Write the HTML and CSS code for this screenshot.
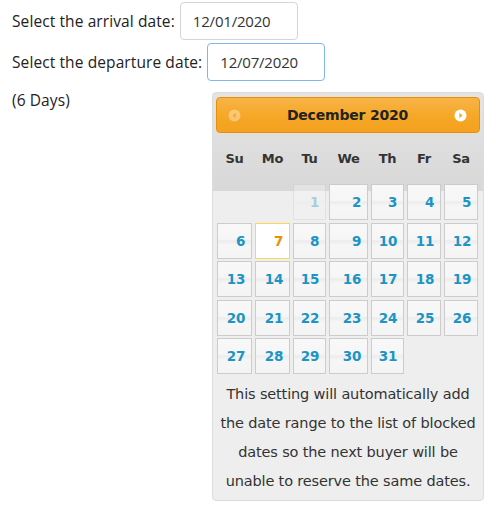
FILE: index.html
```html
<!DOCTYPE html>
<html>
<head>
<meta charset="utf-8">
<link rel="stylesheet" href="styles.css">
</head>
<body>
<div class="form">
  <div class="row">
    <span class="label">Select the arrival date:</span>
    <span class="input">12/01/2020</span>
  </div>
  <div class="row">
    <span class="label">Select the departure date:</span>
    <span class="input focus">12/07/2020</span>
  </div>
  <div class="days-row">
    <span class="days">(6 Days)</span>
    <div class="picker">
      <div class="picker-head">
        <span class="nav prev"><svg width="13" height="13" viewBox="0 0 13 13"><circle cx="6.5" cy="6.5" r="6" fill="#fff"/><path d="M7.6 3.8 L4.6 6.5 L7.6 9.2 Z" fill="#f6a828"/></svg></span>
        <span class="title">December 2020</span>
        <span class="nav next"><svg width="13" height="13" viewBox="0 0 13 13"><circle cx="6.5" cy="6.5" r="6" fill="#fff"/><path d="M5.4 3.8 L8.4 6.5 L5.4 9.2 Z" fill="#f6a828"/></svg></span>
      </div>
      <div class="dow">
        <span>Su</span><span>Mo</span><span>Tu</span><span>We</span><span>Th</span><span>Fr</span><span>Sa</span>
      </div>
      <div class="grid">
        <span class="empty"></span><span class="empty"></span>
        <span class="cell disabled">1</span><span class="cell">2</span><span class="cell">3</span><span class="cell">4</span><span class="cell">5</span>
        <span class="cell">6</span><span class="cell active">7</span><span class="cell">8</span><span class="cell">9</span><span class="cell">10</span><span class="cell">11</span><span class="cell">12</span>
        <span class="cell">13</span><span class="cell">14</span><span class="cell">15</span><span class="cell">16</span><span class="cell">17</span><span class="cell">18</span><span class="cell">19</span>
        <span class="cell">20</span><span class="cell">21</span><span class="cell">22</span><span class="cell">23</span><span class="cell">24</span><span class="cell">25</span><span class="cell">26</span>
        <span class="cell">27</span><span class="cell">28</span><span class="cell">29</span><span class="cell">30</span><span class="cell">31</span>
      </div>
      <p class="note">This setting will automatically add the date range to the list of blocked dates so the next buyer will be unable to reserve the same dates.</p>
    </div>
  </div>
</div>
</body>
</html>
```

FILE: styles.css
```css
* { box-sizing: border-box; }
html, body { margin: 0; padding: 0; background: #fff; }
body {
  font-family: "Open Sans", "Liberation Sans", sans-serif;
  font-size: 15.5px;
  letter-spacing: 0.1px;
  color: #222;
}
.form { padding: 2px 0 0 12px; }
.row {
  display: flex;
  align-items: center;
  gap: 5px;
  height: 38px;
  margin-bottom: 3px;
}
.label { white-space: nowrap; }
.input {
  display: flex;
  align-items: center;
  width: 118px;
  height: 38px;
  padding: 0 10px 0 12px;
  border: 1px solid #d5d5d5;
  border-radius: 4px;
  font-size: 15px;
  letter-spacing: -0.2px;
  color: #333;
}
.input.focus { border-color: #7fb6ee; }
.days-row {
  display: flex;
  align-items: flex-start;
  padding-top: 6px;
}
.days { width: 200px; line-height: 20px; }
.picker {
  margin-top: 2px;
  width: 272px;
  border: 1px solid #dcdcdc;
  border-radius: 4px;
  padding: 4px 3px 4px 3px;
  background: linear-gradient(to bottom, #e4e4e4 0, #d8d8d8 98px, #eeeeee 98px);
  font-family: "DejaVu Sans", sans-serif;
  letter-spacing: 0;
}
.picker-head {
  display: flex;
  align-items: center;
  justify-content: space-between;
  height: 36px;
  padding: 0 12px 0 11px;
  border: 1px solid #e78f08;
  border-radius: 4px;
  background: linear-gradient(to bottom, #f8b448 0, #f6a828 50%, #f4a11d 100%);
}
.nav { display: flex; width: 13px; height: 13px; }
.nav.prev { opacity: 0.35; }
.title {
  font-weight: bold;
  font-size: 14px;
  color: #222;
  letter-spacing: -0.2px;
}
.dow, .grid {
  display: grid;
  grid-template-columns: 35px 35px 33px 39px 33px 34px 34px;
  column-gap: 3px;
  padding-left: 1px;
}
.dow {
  height: 51px;
  align-items: center;
  font-weight: bold;
  font-size: 13px;
  color: #333;
  text-align: center;
  letter-spacing: -0.3px;
}
.grid { row-gap: 2.5px; }
.grid span { height: 36px; }
.cell {
  display: flex;
  align-items: center;
  justify-content: flex-end;
  padding-right: 6px;
  border: 1px solid #cccccc;
  background: linear-gradient(to bottom, #f8f8f8 0, #f6f6f6 45%, #ececec 50%, #f6f6f6 62%, #f4f4f4 100%);
  color: #1c94c4;
  font-weight: bold;
  font-size: 13.5px;
  letter-spacing: -0.3px;
}
.cell.disabled { opacity: 0.35; }
.cell.active {
  border-color: #fbd850;
  background: #fff;
  color: #eb8f00;
}
.note {
  margin: 0;
  padding: 6px 0 0;
  text-align: center;
  font-size: 14.5px;
  letter-spacing: -0.15px;
  line-height: 29px;
  color: #333;
}
```
